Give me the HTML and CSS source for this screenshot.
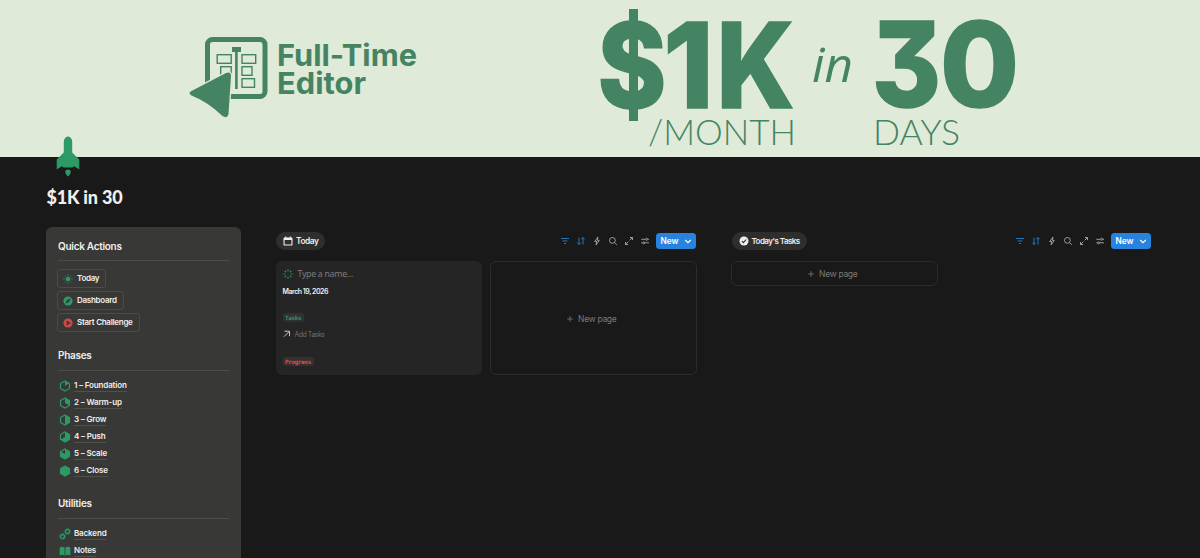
FILE: index.html
```html
<!DOCTYPE html>
<html lang="en">
<head>
<meta charset="utf-8">
<title>$1K in 30</title>
<link rel="stylesheet" href="styles.css">
</head>
<body>
<svg class="defs" width="0" height="0" aria-hidden="true">
  <symbol id="filter" viewBox="0 0 10 10"><path d="M1 2.500h8M2.500 5h5M4 7.500h2"/></symbol>
  <symbol id="sort" viewBox="0 0 10 10"><path d="M3 1.500v7M1.200 6.700 3 8.500l1.800-1.800M7 8.500v-7M5.200 3.300 7 1.500l1.800 1.800"/></symbol>
  <symbol id="bolt" viewBox="0 0 10 10"><path d="M6 1 2.700 5.500H4.800L4 9 7.300 4.300H5.200Z"/></symbol>
  <symbol id="search" viewBox="0 0 10 10"><circle cx="4.400" cy="4.400" r="2.900"/><path d="m6.600 6.600 2.200 2.200"/></symbol>
  <symbol id="expand" viewBox="0 0 10 10"><path d="M5.700 4.300 8.500 1.500M5.900 1.500h2.600v2.600M4.300 5.700 1.500 8.500M1.500 5.900v2.600h2.600"/></symbol>
  <symbol id="sliders" viewBox="0 0 10 10"><path d="M1.300 3.300h4.200M7.700 3.300h1.300M1.300 6.800h1.300M4.800 6.800h4.200"/><circle cx="6.600" cy="3.300" r="1"/><circle cx="3.700" cy="6.800" r="1"/></symbol>
  <symbol id="chevron" viewBox="0 0 10 10"><path d="m2.200 4 2.800 2.700L7.800 4"/></symbol>
  <symbol id="plus" viewBox="0 0 10 10"><path d="M5 2.200v5.600M2.200 5h5.600"/></symbol>
</svg>

<header class="cover">
  <svg class="cover-art" width="1200" height="157" viewBox="0 0 1200 157">
    <rect x="207.500" y="39.500" width="57.500" height="57" rx="5" fill="none" stroke="#458462" stroke-width="5"/>
    <g fill="none" stroke="#458462" stroke-width="1.400">
      <rect x="217.200" y="54.700" width="14" height="8.600"/>
      <rect x="220.700" y="66.700" width="10.500" height="8.600"/>
      <rect x="242" y="54.700" width="13.700" height="8.600"/>
      <rect x="242" y="66.700" width="10" height="8.600"/>
      <rect x="242" y="78.700" width="12.500" height="8.600"/>
    </g>
    <path d="M232 47h9v5h-3.300v37h-2.600V52H232Z" fill="#458462"/>
    <path d="M191.500 91 226 73Q231 71 231 76L228.500 114Q227.500 119 222.500 116Q208 102 191.500 95.500Q187.500 93 191.500 91Z" fill="#458462" stroke="#dfead9" stroke-width="2.600" paint-order="stroke"/>
    <text class="brand" x="277" y="66" textLength="140" lengthAdjust="spacingAndGlyphs">Full-Time</text>
    <text class="brand" x="277" y="93.500" textLength="89" lengthAdjust="spacingAndGlyphs">Editor</text>
    <text class="giant" x="597.500" y="108" textLength="69" lengthAdjust="spacingAndGlyphs">$</text>
    <path d="M629 9h9v112h-9z" fill="#458462"/>
    <text class="giant" x="663.500" y="107.500" textLength="50" lengthAdjust="spacingAndGlyphs">1</text>
    <text class="giant" x="716.500" y="107.500" textLength="78" lengthAdjust="spacingAndGlyphs">K</text>
    <text class="within" x="812" y="81.500" textLength="41" lengthAdjust="spacingAndGlyphs">in</text>
    <text class="giant" x="872" y="106.500" textLength="69" lengthAdjust="spacingAndGlyphs">3</text>
    <text class="giant" x="940" y="106.500" textLength="79" lengthAdjust="spacingAndGlyphs">0</text>
    <text class="thin" x="648" y="145" textLength="148" lengthAdjust="spacingAndGlyphs">/MONTH</text>
    <text class="thin" x="873" y="145" textLength="87" lengthAdjust="spacingAndGlyphs">DAYS</text>
  </svg>
  <svg class="rocket" width="24" height="42" viewBox="0 0 24 42" fill="#2d9964"><path d="M12 .5Q8 1 7.800 6v10.500L.7 23.500v10l5.300-3.300 1.500 1.300h9l1.500-1.300 5.300 3.300v-10l-7.100-7V6Q16 1 12 .5Z"/><path d="M9.500 34.500q2.500-2 5 0 1 3-2.500 6-3.500-3-2.500-6Z"/></svg>
</header>

<main class="page">
  <h1 class="title">$1K in 30</h1>
  <div class="columns">
    <aside class="sidebar">
      <section class="group actions">
        <h2>Quick Actions</h2>
        <button class="action"><svg width="10" height="10" viewBox="0 0 10 10"><circle cx="5" cy="5" r="2.300" fill="#2d9964"/><path d="M5 .4v1.300M5 8.300v1.300M.4 5h1.300M8.300 5h1.300M1.800 1.800l.8.800M7.400 7.400l.8.800M8.200 1.800l-.8.800M2.600 7.400l-.8.800" stroke="#2d9964" stroke-width="1"/></svg><span>Today</span></button>
        <button class="action"><svg width="10" height="10" viewBox="0 0 10 10"><circle cx="5" cy="5" r="4.600" fill="#2d9964"/><path d="M7.800 2.200 6 6 2.200 7.800 4 4Z" fill="#383836"/></svg><span>Dashboard</span></button>
        <button class="action"><svg width="10" height="10" viewBox="0 0 10 10"><circle cx="5" cy="5" r="4.600" fill="#cd4945"/><path d="M3.700 2.600 7.600 5 3.700 7.400Z" fill="#383836"/></svg><span>Start Challenge</span></button>
      </section>
      <section class="group phases">
        <h2>Phases</h2>
        <a class="link"><svg width="12" height="12" viewBox="0 0 12 12"><path class="hex" d="M6 1 10.500 3.500v5L6 11 1.500 8.500v-5Z"/><path class="fill" d="M6 1v5l4-3Z"/></svg><span>1 – Foundation</span></a>
        <a class="link"><svg width="12" height="12" viewBox="0 0 12 12"><path class="hex" d="M6 1 10.500 3.500v5L6 11 1.500 8.500v-5Z"/><path class="fill" d="M6 1v5l4.300 2.500V3.500Z"/></svg><span>2 – Warm-up</span></a>
        <a class="link"><svg width="12" height="12" viewBox="0 0 12 12"><path class="hex" d="M6 1 10.500 3.500v5L6 11 1.500 8.500v-5Z"/><path class="fill" d="M6 1v10l4.500-2.500v-5Z"/></svg><span>3 – Grow</span></a>
        <a class="link"><svg width="12" height="12" viewBox="0 0 12 12"><path class="hex" d="M6 1 10.500 3.500v5L6 11 1.500 8.500v-5Z"/><path class="fill" d="M6 1v5L1.500 8.500 6 11l4.500-2.500v-5Z"/></svg><span>4 – Push</span></a>
        <a class="link"><svg width="12" height="12" viewBox="0 0 12 12"><path class="hex" d="M6 1 10.500 3.500v5L6 11 1.500 8.500v-5Z"/><path class="fill" d="M6 1v5L2 3.500 1.500 8.500 6 11l4.500-2.500v-5Z"/></svg><span>5 – Scale</span></a>
        <a class="link"><svg width="12" height="12" viewBox="0 0 12 12"><path class="hex fill" d="M6 1 10.500 3.500v5L6 11 1.500 8.500v-5Z"/></svg><span>6 – Close</span></a>
      </section>
      <section class="group utilities">
        <h2>Utilities</h2>
        <a class="link"><svg width="12" height="12" viewBox="0 0 12 12" fill="none" stroke="#2d9964"><circle cx="3.500" cy="8.500" r="2" stroke-width="1.300"/><circle cx="8.500" cy="3.500" r="2" stroke-width="1.300"/><circle cx="3.500" cy="8.500" r="2.900" stroke-width=".8" stroke-dasharray="1.100 1.180"/><circle cx="8.500" cy="3.500" r="2.900" stroke-width=".8" stroke-dasharray="1.100 1.180"/></svg><span>Backend</span></a>
        <a class="link"><svg width="12" height="12" viewBox="0 0 12 12" fill="#2d9964"><path d="M.7 2.500Q3.500 1.200 5.600 2.500v8Q3.500 9.300.7 10.300ZM6.400 2.500Q8.500 1.200 11.300 2.500v7.800Q8.500 9.300 6.400 10.500Z"/></svg><span>Notes</span></a>
      </section>
    </aside>

    <section class="view">
      <div class="bar">
        <span class="tab"><svg width="10" height="10" viewBox="0 0 10 10"><path d="M1.200 1.500h7.600q.7 0 .7.700v6.600q0 .7-.7.700H1.200q-.7 0-.7-.7V2.200q0-.7.700-.7ZM1.600 4v4.400h6.800V4Z" fill="#f0efed" fill-rule="evenodd"/><path d="M2.800.4v2M7.200.4v2" stroke="#f0efed"/></svg><span>Today</span></span>
        <div class="tools">
          <svg class="ico on"><use href="#filter"/></svg><svg class="ico on"><use href="#sort"/></svg><svg class="ico"><use href="#bolt"/></svg><svg class="ico"><use href="#search"/></svg><svg class="ico"><use href="#expand"/></svg><svg class="ico"><use href="#sliders"/></svg>
          <button class="new"><span>New</span><svg class="caret"><use href="#chevron"/></svg></button>
        </div>
      </div>
      <div class="gallery">
        <article class="card">
          <div class="name"><svg width="10" height="10" viewBox="0 0 10 10"><path d="M5 .6v1.700M5 7.700v1.700M.6 5h1.700M7.700 5h1.700M1.900 1.900l1.200 1.200M6.900 6.900l1.200 1.200M8.100 1.900l-1.200 1.200M3.100 6.900l-1.200 1.200" stroke="#2d9964" stroke-width="1.200"/></svg><span>Type a name...</span></div>
          <div class="date">March 19, 2026</div>
          <div class="tag green">Tasks</div>
          <div class="add"><svg width="8" height="8" viewBox="0 0 8 8"><path d="M1 6.700 6.500 1.200M1.500 1.200h5V6.200" fill="none" stroke="#c4c4c2"/></svg><span>Add Tasks</span></div>
          <div class="tag red">Progress</div>
        </article>
        <div class="blank"><svg class="plus"><use href="#plus"/></svg><span>New page</span></div>
      </div>
    </section>

    <section class="view last">
      <div class="bar">
        <span class="tab wide"><svg width="10" height="10" viewBox="0 0 10 10"><circle cx="5" cy="5" r="4.500" fill="#f0efed"/><path d="m2.900 5.200 1.500 1.500 2.800-3.200" fill="none" stroke="#2c2c2b" stroke-width="1.100"/></svg><span>Today's Tasks</span></span>
        <div class="tools">
          <svg class="ico on"><use href="#filter"/></svg><svg class="ico on"><use href="#sort"/></svg><svg class="ico"><use href="#bolt"/></svg><svg class="ico"><use href="#search"/></svg><svg class="ico"><use href="#expand"/></svg><svg class="ico"><use href="#sliders"/></svg>
          <button class="new"><span>New</span><svg class="caret"><use href="#chevron"/></svg></button>
        </div>
      </div>
      <div class="gallery">
        <div class="blank short"><svg class="plus"><use href="#plus"/></svg><span>New page</span></div>
      </div>
    </section>
  </div>
</main>
</body>
</html>
```
FILE: styles.css
```css
* { box-sizing: border-box; }
body {
  margin: 0;
  height: 558px;
  overflow: hidden;
  background: #191919;
  color: #f0efed;
  font-family: Inter, "Liberation Sans", sans-serif;
}
h1, h2 { margin: 0; }
button { font: inherit; color: inherit; background: none; border: 0; padding: 0; }
svg { display: block; flex: none; }
.defs { position: absolute; }

.cover { position: relative; height: 157px; background: #dfead9; }
.cover-art text { fill: #458462; }
.brand { font: 700 30.5px Inter, sans-serif; }
.cover-art .giant { font: 800 118px Inter, sans-serif; font-feature-settings: "cv09"; stroke: #458462; stroke-width: 1.5px; }
.within { font: italic 400 48px "Open Sans", sans-serif; }
.thin { font: 300 36px Lato, sans-serif; }
.rocket { position: absolute; left: 56px; top: 136px; }

.page { padding: 30px 48px 0 46.5px; }
.title { height: 20px; font: 900 18px/20px Lato, sans-serif; letter-spacing: -.2px; }
.columns { display: grid; grid-template-columns: 195px 420px 420px; column-gap: 35px; margin: 20px 0 0 -.5px; }

.sidebar { height: 340px; padding: 9px 12px 0; background: #383836; border-radius: 6px; }
.group h2 {
  height: 25px;
  line-height: 20px;
  font-size: 10px;
  font-weight: 600;
  letter-spacing: -.28px;
  border-bottom: 1px solid #4d4d4a;
}
.actions { display: flex; flex-direction: column; align-items: flex-start; gap: 3px; height: 110px; }
.actions h2 { width: 100%; margin-bottom: 5px; }
.action {
  display: flex;
  align-items: center;
  gap: 4px;
  height: 19px;
  margin-left: -1px;
  padding: 0 6px 0 5px;
  border: 1px solid #4b4b48;
  border-radius: 3px;
  font-size: 8px;
  line-height: 12px;
  font-weight: 600;
  letter-spacing: -.28px;
}
.action span { margin-top: -1px; }
.phases { height: 148px; }
.phases h2 { line-height: 18px; }
.phases h2, .utilities h2 { margin-bottom: 6px; }
.utilities h2 { line-height: 18px; }
.link { display: flex; align-items: center; gap: 3px; height: 17.15px; padding-left: 1px; font-size: 8px; font-weight: 600; letter-spacing: -.15px; }
.link span { height: 12px; line-height: 11px; border-bottom: 1px solid #4f4f4c; }
.hex { fill: none; stroke: #2d9964; stroke-width: 1.2; }
.fill { fill: #2d9964; }

.last { margin-left: .5px; }
.bar { display: flex; align-items: center; justify-content: space-between; height: 18px; margin-top: 5px; }
.tab {
  display: flex;
  align-items: center;
  gap: 3px;
  height: 18px;
  padding: 0 7px;
  border-radius: 9px;
  background: #2e2e2d;
  font-size: 8.3px;
  font-weight: 600;
  letter-spacing: -.45px;
}
.wide { font-size: 8px; letter-spacing: -.55px; }
.tools { display: flex; align-items: center; gap: 6px; }
.ico { width: 10px; height: 10px; fill: none; stroke: #a9a9a6; stroke-width: .9; }
.ico.on { stroke: #2b7fd0; }
.new { display: flex; align-items: center; width: 40px; height: 16px; border-radius: 3.5px; background: #2783de; color: #fff; font-size: 8.3px; font-weight: 600; }
.new span { width: 27px; text-align: center; }
.caret { width: 10px; height: 10px; fill: none; stroke: #fff; stroke-width: 1.1; }

.gallery { display: grid; grid-template-columns: 206.5px 206.5px; gap: 8px; margin: 11px 0 0 -.5px; }
.card { height: 114px; padding: 7px; border-radius: 6px; background: #252525; }
.name { display: flex; align-items: center; gap: 5px; height: 11px; color: #7d7d7b; font: 8.8px "Noto Sans", sans-serif; letter-spacing: -.3px; }
.date { height: 10px; margin-top: 8px; line-height: 10px; font-size: 7px; font-weight: 600; letter-spacing: -.48px; }
.tag { width: max-content; height: 9px; padding: 0 2.5px; border-radius: 2px; font: 700 6px/9px "DejaVu Sans Mono", monospace; letter-spacing: -.35px; }
.green { margin-top: 16px; background: #303231; color: #3f8a64; }
.red { margin-top: 18px; background: #353030; color: #d9534f; }
.add { display: flex; align-items: center; gap: 4px; height: 10px; margin-top: 7px; color: #6f6f6d; font: 7px Inter, sans-serif; letter-spacing: -.5px; }
.blank { display: flex; align-items: center; justify-content: center; gap: 3px; height: 114px; padding: 1px 5px 0 0; border: 1px solid #2c2c2c; border-radius: 6px; color: #7a7a78; font-size: 8.5px; letter-spacing: -.3px; }
.short { height: 25px; }
.plus { width: 10px; height: 10px; stroke: #7a7a78; stroke-width: .8; }
```
